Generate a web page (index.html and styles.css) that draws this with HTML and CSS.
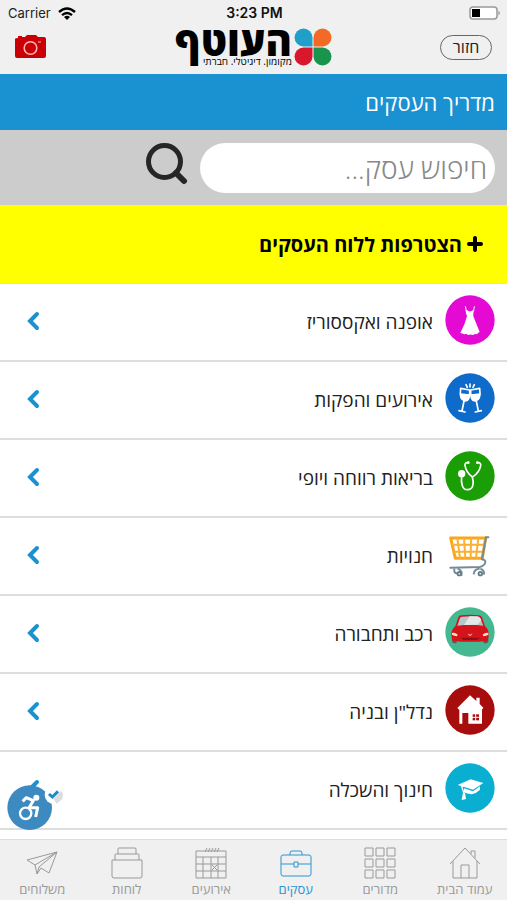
FILE: index.html
```html
<!DOCTYPE html>
<html lang="he" dir="rtl">
<head>
<meta charset="utf-8">
<meta name="viewport" content="width=device-width, initial-scale=1">
<title>מדריך העסקים</title>
<link rel="stylesheet" href="styles.css">
</head>
<body>
<header class="top">
  <div class="status" dir="ltr">
    <span class="carrier">Carrier
      <svg width="18" height="13" viewBox="0 0 18 13" aria-hidden="true"><g fill="none" stroke="#000" stroke-width="2.4"><path d="M1 5Q9-2 17 5"/><path d="M4 8.200Q9 3.800 14 8.200"/></g><path d="M6 10Q9 7.500 12 10L9 13z"/></svg>
    </span>
    <span class="clock">3:23 PM</span>
    <span class="power">
      <svg width="32" height="14" viewBox="0 0 32 14" aria-hidden="true"><rect x="1" y="1" width="27" height="12" rx="3" fill="#fff" stroke="#999" stroke-width="1.500"/><rect x="3" y="3" width="8" height="8"/><path d="M29.500 4.500Q32 7 29.500 9.500z" fill="#888"/></svg>
    </span>
  </div>
  <div class="brandbar">
    <button class="back" type="button">חזור</button>
    <a class="logo" href="#">
      <svg width="38" height="38" viewBox="0 0 38 38" aria-hidden="true"><path d="M18.500 18.500H9.500A9 9 0 1 1 18.500 9.500z" fill="#1f9fc9"/><path d="M19.500 18.500V9.500A9 9 0 1 1 28.500 18.500z" fill="#f26a25"/><path d="M18.500 19.500V28.500A9 9 0 1 1 9.500 19.500z" fill="#d9182d"/><path d="M19.500 19.500H28.500A9 9 0 1 1 19.500 28.500z" fill="#18944c"/></svg>
      <span class="logo-text"><span class="logo-name">העוטף</span><span class="logo-sub">מקומון. דיגיטלי. חברתי</span></span>
    </a>
    <button class="camera" type="button" aria-label="מצלמה">
      <svg width="32" height="26" viewBox="0 0 32 26" aria-hidden="true"><path d="M3 4V2H7V3H10L12 1H21L23 3H29Q31 3 31 5V22Q31 24 29 24H2Q0 24 0 22V5Q0 4 3 4z" fill="#c90005"/><circle cx="15.500" cy="14" r="6.300" fill="none" stroke="#ffb5b5" stroke-width="1.600"/><path d="M23 8h3" stroke="#ffb5b5"/></svg>
    </button>
  </div>
</header>
<h1 class="title">מדריך העסקים</h1>
<form class="search">
  <input class="search-input" type="search" placeholder="חיפוש עסק..." aria-label="חיפוש עסק">
  <button class="search-button" type="submit" aria-label="חיפוש">
    <svg width="42" height="42" viewBox="0 0 42 42" aria-hidden="true"><g fill="none" stroke="#262626"><circle cx="18.500" cy="18.500" r="16" stroke-width="5"/><path d="M30 30L38 38" stroke-width="6" stroke-linecap="round"/></g></svg>
  </button>
</form>
<a class="join" href="#">
  <svg width="16" height="16" viewBox="0 0 16 16" aria-hidden="true"><path d="M8 2V14M2 8H14" stroke="#000" stroke-width="4" stroke-linecap="round"/></svg>
  <span>הצטרפות ללוח העסקים</span>
</a>
<main class="list">
  <a class="row" href="#">
    <svg class="badge" viewBox="0 0 150 150" aria-hidden="true"><circle cx="75" cy="75" r="74" fill="#e50ad3"/><path d="M61 34L64 47Q75 56 86 47L88 34M63 46L66 60" fill="none" stroke="#fff" stroke-width="3"/><path d="M62 46Q69 46 75 51Q81 46 88 46Q83 55 85 64L104 111Q98 114 96 118Q89 116 85 120Q76 117 70 120Q64 115 57 118Q52 115 46 114Q60 88 66 64Q67 55 62 46z" fill="#fff"/></svg>
    <span class="name">אופנה ואקססוריז</span>
    <svg class="chevron" viewBox="0 0 14 20" aria-hidden="true"><path d="M11 3L4 10L11 17"/></svg>
  </a>
  <a class="row" href="#">
    <svg class="badge" viewBox="0 0 150 150" aria-hidden="true"><circle cx="75" cy="75" r="74" fill="#0f6bca"/><g fill="none" stroke="#fff" stroke-width="5" stroke-linecap="round" stroke-linejoin="round"><path d="M75 33v9M63 35l4 8M88 35l-4 8"/><path d="M47 46L74 51Q76 84 60 84Q42 80 47 46zM57 84L51 114M42 113L60 117"/><path d="M104 46L77 51Q75 84 91 84Q109 80 104 46zM94 84L100 114M91 117L109 113"/></g><path d="M45 61L75 64Q75 83 61 84Q44 82 45 61zM106 61L77 64Q77 83 91 84Q107 82 106 61z" fill="#fff"/></svg>
    <span class="name">אירועים והפקות</span>
    <svg class="chevron" viewBox="0 0 14 20" aria-hidden="true"><path d="M11 3L4 10L11 17"/></svg>
  </a>
  <a class="row" href="#">
    <svg class="badge" viewBox="0 0 150 150" aria-hidden="true"><circle cx="75" cy="75" r="74" fill="#1b9e05"/><g fill="none" stroke="#fff" stroke-width="5" stroke-linecap="round"><path d="M69 35Q59 34 60 44Q64 65 81 77"/><path d="M98 35Q108 34 107 44Q103 65 84 77"/><path d="M50 75C47 99 53 117 68 116C84 116 88 98 82 78"/></g><circle cx="50" cy="68" r="11" fill="#fff"/><circle cx="70" cy="35" r="4" fill="#fff"/><circle cx="97" cy="35" r="4" fill="#fff"/></svg>
    <span class="name">בריאות רווחה ויופי</span>
    <svg class="chevron" viewBox="0 0 14 20" aria-hidden="true"><path d="M11 3L4 10L11 17"/></svg>
  </a>
  <a class="row" href="#">
    <svg class="badge" viewBox="0 0 150 150" aria-hidden="true"><path d="M17 27H122L112 88H31z" fill="#fff" stroke="#faa61a" stroke-width="9" stroke-linejoin="round"/><path d="M37 27L45 88M57 27L61 88M78 27L77 88M100 27L93 88M21 47H119M26 68H116" stroke="#fbb034" stroke-width="6"/><path d="M130 25H123L111 91Q126 94 119 105Q114 112 104 114L16 116" fill="none" stroke="#748b98" stroke-width="6" stroke-linecap="round"/><g fill="none" stroke="#748b98" stroke-width="6"><path d="M28 119Q26 133 36 133M38 119Q54 126 49 140M86 136Q87 119 104 119M106 119Q121 126 116 137"/></g><circle cx="43" cy="134" r="8" fill="#607986"/><circle cx="106" cy="134" r="8" fill="#607986"/><circle cx="43" cy="134" r="3" fill="#ddd"/><circle cx="106" cy="134" r="3" fill="#ddd"/></svg>
    <span class="name">חנויות</span>
    <svg class="chevron" viewBox="0 0 14 20" aria-hidden="true"><path d="M11 3L4 10L11 17"/></svg>
  </a>
  <a class="row" href="#">
    <svg class="badge" viewBox="0 0 150 150" aria-hidden="true"><circle cx="75" cy="75" r="74" fill="#43b891"/><path d="M21 88H35V107Q28 111 22 106zM115 88H130V106Q122 111 115 107z" fill="#555c66"/><path d="M31 58L40 31Q42 25 49 25Q75 21 102 25Q109 26 111 31L120 58Q132 67 131 84L128 101Q75 108 22 101L19 84Q19 67 31 58z" fill="#d5131b"/><path d="M37 56L45 33Q47 29 53 29Q76 26 98 29Q104 29 106 34L115 56Q76 50 37 56z" fill="#b6c6cb"/><path d="M57 54L74 28H97Q104 29 106 34L109 40L97 53z" fill="#e3e9e9"/><path d="M21 78Q31 76 38 83L36 88Q27 87 21 83zM130 78Q120 76 113 83L115 88Q124 87 130 83z" fill="#ffe4b0"/><path d="M68 79L75 83L83 79L78 86H72z" fill="#f2b3ae"/><path d="M48 92H103L97 99H54z" fill="#8d1016"/></svg>
    <span class="name">רכב ותחבורה</span>
    <svg class="chevron" viewBox="0 0 14 20" aria-hidden="true"><path d="M11 3L4 10L11 17"/></svg>
  </a>
  <a class="row" href="#">
    <svg class="badge" viewBox="0 0 150 150" aria-hidden="true"><circle cx="75" cy="75" r="74" fill="#a80d0d"/><path d="M75 31L94 48V38H104V57L115 68L111 74V116H70V84H52V116H43V75L37 69z" fill="#fff"/><path d="M83 88H102V106H83z" fill="#a80d0d"/><path d="M92 86V108M81 97H104" stroke="#fff" stroke-width="3"/></svg>
    <span class="name">נדל"ן ובניה</span>
    <svg class="chevron" viewBox="0 0 14 20" aria-hidden="true"><path d="M11 3L4 10L11 17"/></svg>
  </a>
  <a class="row" href="#">
    <svg class="badge" viewBox="0 0 150 150" aria-hidden="true"><circle cx="75" cy="75" r="74" fill="#0aaed0"/><path d="M38 66L77 49L115 60L84 80z" fill="#fff"/><path d="M57 76L84 85L105 70V80Q94 91 80 94Q66 92 57 88z" fill="#fff"/><path d="M83 61L50 70L57 92" fill="none" stroke="#fff" stroke-width="4"/><path d="M54 89L60 89L63 108L50 111z" fill="#fff"/></svg>
    <span class="name">חינוך והשכלה</span>
    <svg class="chevron" viewBox="0 0 14 20" aria-hidden="true"><path d="M11 3L4 10L11 17"/></svg>
  </a>
</main>
<footer class="dock">
  <button class="access" type="button" aria-label="נגישות">
    <svg width="58" height="50" viewBox="0 0 174 150" aria-hidden="true"><circle cx="68" cy="80" r="67" fill="#3d8ac1"/><circle cx="140" cy="42" r="27" fill="#fff"/><path d="M139 53L163 30Q173 42 163 57L149 68z" fill="#ddd"/><path d="M126 39L136 48L153 31" fill="none" stroke="#2387c4" stroke-width="9"/><g fill="none" stroke="#fff" stroke-linejoin="round"><circle cx="56" cy="97" r="17" stroke-width="7"/><path d="M47 61L58 50L79 59L66 80H92L86 108" stroke-width="9"/></g><circle cx="88" cy="50" r="9" fill="#fff"/></svg>
  </button>
  <nav class="tabs">
    <a class="tab" href="#"><svg viewBox="0 0 32 32" aria-hidden="true"><path d="M1 17L16 1L31 17M4 14V31H28V14M12 31V18H20V31M22 7V4H26V11"/></svg><span>עמוד הבית</span></a>
    <a class="tab" href="#"><svg viewBox="0 0 32 32" aria-hidden="true"><path d="M1 1h8v8h-8zM12 1h8v8h-8zM23 1h8v8h-8zM1 12h8v8h-8zM12 12h8v8h-8zM23 12h8v8h-8zM1 23h8v8h-8zM12 23h8v8h-8zM23 23h8v8h-8z"/></svg><span>מדורים</span></a>
    <a class="tab active" href="#" aria-current="page"><svg viewBox="0 0 32 32" aria-hidden="true"><path d="M3 8H29Q31 8 31 10V27Q31 29 29 29H3Q1 29 1 27V10Q1 8 3 8zM10 8V6Q10 4 12 4H20Q22 4 22 6V8M1 17H14M18 17H31M14 15H18V20H14z"/></svg><span>עסקים</span></a>
    <a class="tab" href="#"><svg viewBox="0 0 32 32" aria-hidden="true"><path d="M1 4H31V31H1zM1 10H31M1 17H31M1 24H31M8 10V31M16 10V31M23 10V31M17 18L22 23M22 18L17 23"/><path d="M10 5L12 1M13 5L15 1M16 5L18 1M19 5L21 1M22 5L24 1"/></svg><span>אירועים</span></a>
    <a class="tab" href="#"><svg viewBox="0 0 32 32" aria-hidden="true"><path d="M1 13H31V29Q31 31 29 31H3Q1 31 1 29zM4 13V8Q4 7 5 7H27Q28 7 28 8V13M7 7V2Q7 1 8 1H24Q25 1 25 2V7"/></svg><span>לוחות</span></a>
    <a class="tab" href="#"><svg viewBox="0 0 32 32" aria-hidden="true"><path d="M1 13L31 5L23 26L15 21L11 27L9 18zM9 18L31 5L13 20L11 27"/></svg><span>משלוחים</span></a>
  </nav>
</footer>
</body>
</html>
```
FILE: styles.css
```css
* {
  box-sizing: border-box;
}

body {
  margin: 0;
  min-height: 100vh;
  display: flex;
  flex-direction: column;
  background: #fff;
  color: #222;
  font-family: "Open Sans", "Noto Sans", sans-serif;
}

a {
  color: inherit;
  text-decoration: none;
}

button {
  padding: 0;
  border: 0;
  background: none;
  color: inherit;
  font: inherit;
  cursor: pointer;
}

svg {
  display: block;
  flex: none;
}

.top {
  height: 74px;
  background: #f0f0f0;
}

.status {
  display: grid;
  grid-template-columns: 1fr auto 1fr;
  align-items: center;
  height: 26px;
  padding: 0 6px 0 8px;
  font-family: Inter, Roboto, sans-serif;
  font-size: 13px;
  line-height: 26px;
}

.carrier {
  display: flex;
  align-items: center;
  gap: 7px;
}

.clock {
  color: #111;
  font-size: 14px;
  font-weight: 600;
}

.power {
  justify-self: end;
}

.brandbar {
  display: grid;
  grid-template-columns: 1fr auto 1fr;
  align-items: center;
  height: 42px;
  padding: 0 15px;
}

.back {
  justify-self: start;
  width: 52px;
  height: 25px;
  border: 1px solid #666;
  border-radius: 13px;
  font-size: 16px;
  line-height: 22px;
}

.logo {
  display: flex;
  align-items: center;
  gap: 2px;
  color: #000;
}

.logo-text {
  display: flex;
  flex-direction: column;
}

.logo-name {
  font-size: 40px;
  font-weight: 800;
  line-height: 28px;
}

.logo-sub {
  font-size: 10px;
  line-height: 12px;
}

.camera {
  justify-self: end;
}

.title {
  margin: 0;
  padding: 0 12px;
  background: #1a91d1;
  color: #fff;
  font-size: 22px;
  font-weight: 400;
  line-height: 56px;
}

.search {
  display: flex;
  align-items: center;
  gap: 12px;
  height: 75px;
  padding: 0 12px;
  background: #ccc;
}

.search-input {
  width: 61%;
  height: 50px;
  padding: 0 8px;
  border: 0;
  border-radius: 25px;
  outline: 0;
  background: #fff;
  color: #333;
  font: 300 28px "Open Sans", "Noto Sans", sans-serif;
  appearance: none;
}

.search-input::placeholder {
  color: #888;
}

.search-button {
  margin-bottom: 8px;
}

.join {
  display: flex;
  align-items: center;
  gap: 5px;
  height: 79px;
  padding: 0 24px;
  border-bottom: 1px solid #ddd;
  background: #ff0;
  color: #000;
  font-size: 20px;
  font-weight: 700;
}

.list {
  flex: 1;
}

.row {
  display: flex;
  align-items: center;
  gap: 12px;
  height: 78px;
  padding: 0 12px 0 26px;
  border-bottom: 2px solid #ddd;
}

.badge {
  width: 50px;
  height: 50px;
  margin-bottom: 4px;
}

.name {
  flex: 1;
  font-size: 19px;
  line-height: 28px;
}

.chevron {
  width: 14px;
  height: 20px;
  margin-bottom: 2px;
  fill: none;
  stroke: #1a91d1;
  stroke-width: 4;
  stroke-linecap: round;
}

.dock {
  position: sticky;
  bottom: 0;
}

.access {
  position: absolute;
  left: 7px;
  bottom: 69px;
}

.tabs {
  display: grid;
  grid-template-columns: repeat(6, 1fr);
  height: 61px;
  border-top: 1px solid #ddd;
  background: #f0f0f0;
}

.tab {
  display: flex;
  flex-direction: column;
  align-items: center;
  gap: 1px;
  padding-top: 7px;
  color: #999;
  font-size: 13px;
  line-height: 18px;
}

.tab svg {
  width: 32px;
  height: 32px;
  fill: none;
  stroke: currentColor;
}

.active {
  color: #2b93d2;
}
```
